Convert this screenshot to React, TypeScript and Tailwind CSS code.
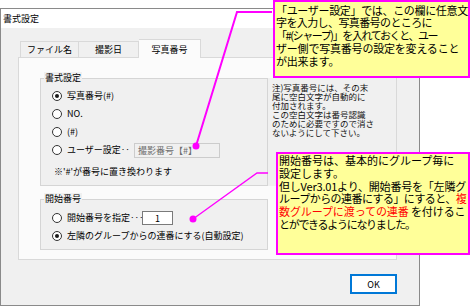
import React from "react";

function Radio({ checked }: { checked?: boolean }) {
  return (
    <span className="w-[10px] h-[10px] rounded-full border border-[#333333] bg-white flex items-center justify-center shrink-0">
      {checked && <span className="w-[4px] h-[4px] rounded-full bg-[#1a1a1a]" />}
    </span>
  );
}

function Group({
  label,
  className,
  children,
}: {
  label: string;
  className: string;
  children: React.ReactNode;
}) {
  return (
    <div className={"relative border border-[#d5d5d5] bg-[#f0f0f0] flex flex-col " + className}>
      <span className="absolute -top-[7px] left-[3px] px-[1px] bg-[#f0f0f0] text-[9px] leading-[12px]">
        {label}
      </span>
      {children}
    </div>
  );
}

export default function App() {
  return (
    <div className="relative w-[475px] h-[306px] bg-white overflow-hidden text-black font-['Noto_Sans_CJK_JP','Noto_Sans',sans-serif]">
      {/* dialog */}
      <div className="mt-[8px] w-[420px] h-[298px] border border-[#8a8a8a] bg-[#f0f0f0] flex flex-col">
        <div className="h-[19px] bg-white flex items-center pl-[2px] text-[9px] leading-none">書式設定</div>
        <div className="flex flex-col pl-[17px] pt-[11px]">
          {/* tabs */}
          <div className="relative z-10 flex items-end h-[18px] pl-[2px]">
            <div className="w-[59px] h-[16px] border border-b-0 border-[#d9d9d9] bg-[#f0f0f0] flex items-center justify-center text-[9px] leading-none">
              ファイル名
            </div>
            <div className="w-[60px] h-[16px] border border-b-0 border-l-0 border-[#d9d9d9] bg-[#f0f0f0] flex items-center justify-center text-[9px] leading-none">
              撮影日
            </div>
            <div className="w-[62px] h-[19px] -mb-px border border-b-0 border-l-0 border-[#d9d9d9] bg-[#fbfbfb] flex items-center justify-center text-[9px] leading-none">
              写真番号
            </div>
          </div>
          {/* panel */}
          <div className="w-[379px] h-[203px] border border-[#d9d9d9] bg-[#fbfbfb] flex pt-[20px] pl-[21px]">
            <div className="flex flex-col">
              <Group label="書式設定" className="w-[228px] h-[108px] pt-[8px] pl-[11px]">
                <div className="flex items-center h-[18px] gap-[5px] text-[9px]">
                  <Radio checked />
                  <span>写真番号(#)</span>
                </div>
                <div className="flex items-center h-[18px] gap-[5px] text-[9px]">
                  <Radio />
                  <span>NO.</span>
                </div>
                <div className="flex items-center h-[18px] gap-[5px] text-[9px]">
                  <Radio />
                  <span>(#)</span>
                </div>
                <div className="flex items-center h-[18px] gap-[5px] text-[9px]">
                  <Radio />
                  <span className="w-[62px] whitespace-nowrap">ユーザー設定‥</span>
                  <div className="w-[86px] h-[15px] border border-[#cccccc] bg-[#f0f0f0] flex items-center pl-[3px] text-[#6d6d6d] text-[9px] leading-none">
                    撮影番号【#】
                  </div>
                </div>
                <div className="mt-[7px] ml-[2px] h-[12px] text-[9px] leading-[12px] whitespace-nowrap">
                  ※'#'が番号に置き換わります
                </div>
              </Group>
              <Group label="開始番号" className="mt-[13px] w-[228px] h-[51px] pt-[9px] pl-[11px]">
                <div className="flex items-center h-[18px] gap-[5px] text-[9px]">
                  <Radio />
                  <span className="w-[70px] whitespace-nowrap">開始番号を指定‥‥</span>
                  <div className="w-[31px] h-[14px] border border-[#7a7a7a] bg-white flex items-center justify-center text-[9px] leading-none">
                    1
                  </div>
                </div>
                <div className="flex items-center h-[18px] gap-[5px] text-[9px] whitespace-nowrap">
                  <Radio checked />
                  <span>左隣のグループからの連番にする(自動設定)</span>
                </div>
              </Group>
            </div>
            <div className="w-[128px] h-[108px] bg-[#f0f0f0] pl-[4px] pt-[5px] text-[8.5px] leading-[9px] whitespace-nowrap text-[#111]">
              <div>注)写真番号には、その末</div>
              <div>尾に空白文字が自動的に</div>
              <div>付加されます。</div>
              <div>この空白文字は番号認識</div>
              <div>のために必要ですので消さ</div>
              <div>ないようにして下さい。</div>
            </div>
          </div>
          {/* OK */}
          <div className="w-[379px] flex justify-end mt-[14px]">
            <div className="w-[47px] h-[20px] border-2 border-[#0078d7] bg-white flex items-center justify-center text-[9px] leading-none">
              OK
            </div>
          </div>
        </div>
      </div>

      {/* callout lines */}
      <svg className="absolute left-0 top-0 pointer-events-none" width="475" height="306" viewBox="0 0 475 306">
        <polyline points="272,12 237,12 196,146" fill="none" stroke="#ff00ff" strokeWidth="2" />
        <circle cx="196" cy="146" r="3.5" fill="#ff00ff" />
        <polyline points="268,173 257,173 193,219" fill="none" stroke="#ff00ff" strokeWidth="1.3" />
        <circle cx="193" cy="219" r="3.5" fill="#ff00ff" />
      </svg>

      {/* callout 1 */}
      <div className="absolute left-[273px] top-0 w-[197px] h-[78px] border-2 border-[#ff00ff] bg-[#ffff99] pl-[1px] pt-[1.5px] text-[11px] leading-[12.75px] whitespace-nowrap">
        <div className="tracking-[-0.33px]">「ユーザー設定」では、この欄に任意文</div>
        <div className="tracking-[-0.6px]">字を入力し、写真番号のところに</div>
        <div className="tracking-[-1.4px]">「#(シャープ)」を入れておくと、ユー</div>
        <div className="tracking-[-0.2px]">ザー側で写真番号の設定を変えること</div>
        <div className="tracking-[-0.3px]">が出来ます。</div>
      </div>

      {/* callout 2 */}
      <div className="absolute left-[276px] top-[152px] w-[194px] h-[103px] border-2 border-[#ff00ff] bg-[#ffff99] pl-[1px] text-[11px] leading-[12.8px] whitespace-nowrap">
        <div>開始番号は、基本的にグループ毎に</div>
        <div>設定します。</div>
        <div className="tracking-[-0.2px]">但しVer3.01より、開始番号を「左隣グ</div>
        <div className="tracking-[-0.55px]">
          ループからの連番にする」にすると、<span className="text-[#ff0000]">複</span>
        </div>
        <div className="tracking-[-0.1px]">
          <span className="text-[#ff0000]">数グループに渡っての連番</span> を付けるこ
        </div>
        <div className="tracking-[-1.3px]">とができるようになりました。</div>
      </div>
    </div>
  );
}
